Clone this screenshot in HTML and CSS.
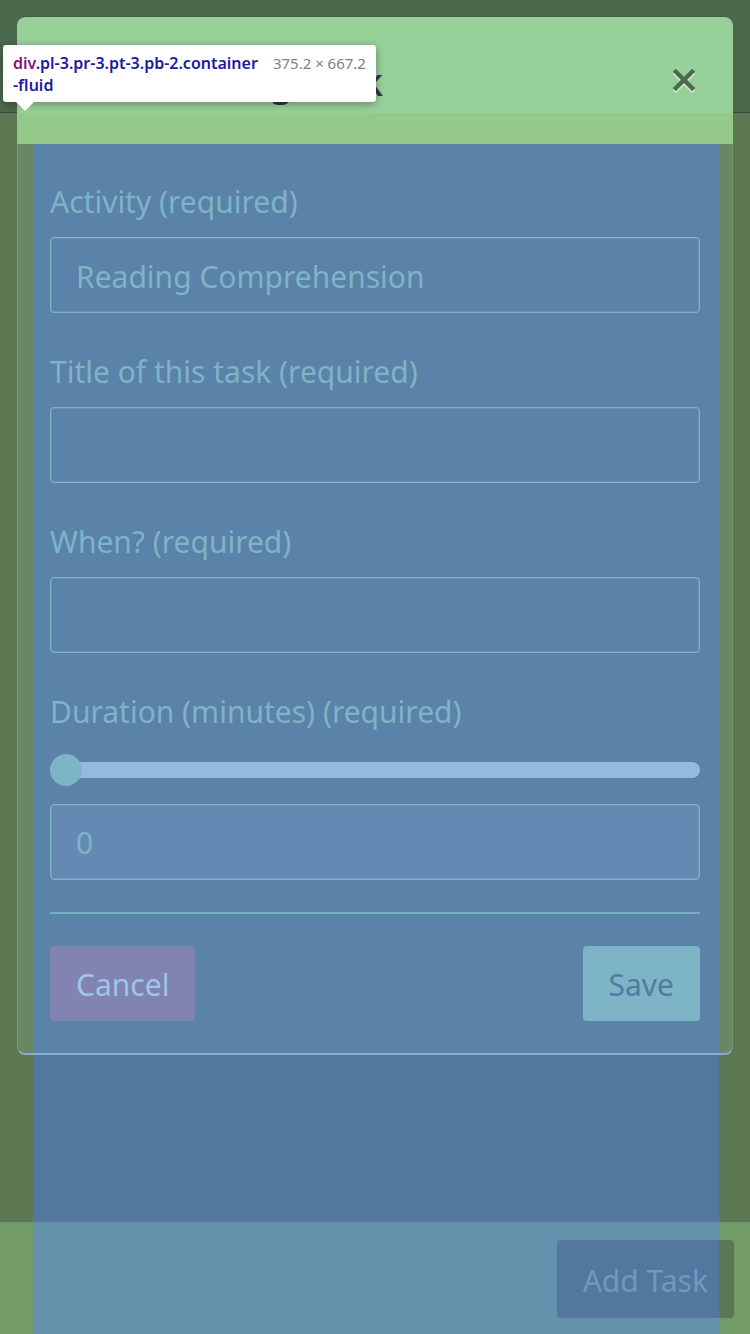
FILE: index.html
```html
<!DOCTYPE html>
<html lang="en">
<head>
<meta charset="utf-8">
<meta name="viewport" content="width=device-width, initial-scale=1">
<title>Add Learning Task</title>
<link rel="stylesheet" href="styles.css">
</head>
<body>
<div class="page">
  <div class="topbar"></div>
  <main class="content"></main>
  <footer class="footer">
    <button class="btn btn-add" type="button">Add Task</button>
  </footer>
</div>

<section class="modal" role="dialog" aria-labelledby="modal-title">
  <header class="modal-header">
    <h1 class="modal-title" id="modal-title">Add Learning Task</h1>
    <button class="close" type="button" aria-label="Close">
      <svg class="close-icon" viewBox="0 0 24 26" aria-hidden="true">
        <path class="close-shade" d="M3 5 21 23M21 5 3 23"/>
        <path class="close-mark" d="M3 3 21 21M21 3 3 21"/>
      </svg>
    </button>
  </header>
  <form class="modal-body">
    <div class="field">
      <label for="activity">Activity (required)</label>
      <div class="select-wrap">
        <select class="control select" id="activity">
          <option>Reading Comprehension</option>
        </select>
        <svg class="caret" viewBox="0 0 12 18" aria-hidden="true"><path d="M6 0 12 7H0ZM0 11H12L6 18Z"/></svg>
      </div>
    </div>
    <div class="field">
      <label for="title">Title of this task (required)</label>
      <input class="control" id="title" type="text">
    </div>
    <div class="field">
      <label for="when">When? (required)</label>
      <input class="control" id="when" type="text">
    </div>
    <div class="field field-last">
      <label for="duration">Duration (minutes) (required)</label>
      <input class="slider" id="duration" type="range" min="0" max="120" value="0">
      <input class="control control-readonly" type="text" value="0" aria-label="Duration value" readonly>
    </div>
    <hr class="rule">
    <div class="actions">
      <button class="btn btn-cancel" type="button">Cancel</button>
      <button class="btn btn-save" type="button">Save</button>
    </div>
  </form>
</section>

<div class="tooltip" role="tooltip">
  <div class="selector"><span class="tag">div</span>.pl-3.pr-3.pt-3.pb-2.container<br>-fluid</div>
  <div class="size">375.2 × 667.2</div>
</div>
</body>
</html>
```
FILE: styles.css
```css
:root {
  --blue: #5b82a9;
  --blue-dark: #52789d;
  --blue-foot: #6491ab;
  --green-dark: #5c7853;
  --green-side: #688762;
  --green-foot: #729b67;
  --teal: #7db4c6;
}

* { box-sizing: border-box; }

body {
  margin: 0;
  position: relative;
  font-family: "Noto Sans", "Open Sans", sans-serif;
  font-size: 30px;
  line-height: 48px;
}

button, input, select { font: inherit; }

.page {
  display: flex;
  flex-direction: column;
  min-height: 100vh;
}

.topbar {
  height: 113px;
  background: #4b694c;
  border-bottom: 1px solid #3d4b44;
}

.content {
  flex: 1;
  background: linear-gradient(to right, var(--green-dark) 33px, var(--blue-dark) 33px calc(100% - 31px), var(--green-dark) calc(100% - 31px));
}

.footer {
  display: flex;
  justify-content: flex-end;
  padding: 16px 16px;
  border-top: 2px solid rgba(118, 134, 150, 0.4);
  background: linear-gradient(to right, var(--green-foot) 33px, var(--blue-foot) 33px calc(100% - 31px), var(--green-foot) calc(100% - 31px)) border-box;
}

.btn {
  padding: 15px 26px 12px;
  border: 0;
  border-radius: 4px;
  line-height: 48px;
}

.btn-add {
  padding: 17px 26px 13px;
  color: #7397c0;
  background: linear-gradient(to right, var(--blue-dark) calc(100% - 15px), var(--green-dark) calc(100% - 15px));
}

.modal {
  position: absolute;
  top: 16px;
  left: 17px;
  right: 17px;
  color: var(--teal);
}

.modal-header {
  display: flex;
  align-items: center;
  justify-content: space-between;
  height: 128px;
  padding: 0 36px 0 33px;
  border-top: 1px solid #435a47;
  border-radius: 9px 9px 0 0;
  background: linear-gradient(#97d199 calc(100% - 31px), #95c98a calc(100% - 31px));
}

.modal-title {
  margin: 0;
  font-size: 38px;
  font-weight: 500;
  color: #34363f;
}

.close {
  display: flex;
  padding: 0;
  border: 0;
  background: none;
}

.close-icon { width: 26px; height: 28px; fill: none; stroke-width: 4; }
.close-shade { stroke: #d3ead2; }
.close-mark { stroke: #4c6a4d; }

.modal-body {
  padding: 34px 32px 32px;
  border: 1px solid #789670;
  border-top: 0;
  border-bottom: 2px solid #86acd2;
  border-radius: 0 0 8px 8px;
  background: linear-gradient(to right, var(--green-side) 15px, var(--blue) 15px calc(100% - 13px), var(--green-side) calc(100% - 13px));
}

.field {
  display: flex;
  flex-direction: column;
  gap: 11px;
  margin-bottom: 35px;
}

.field-last { margin-bottom: 32px; }

.select-wrap { display: grid; align-items: center; }
.select-wrap > * { grid-area: 1 / 1; }

.control {
  width: 100%;
  height: 76px;
  padding: 0 25px;
  border: 1px solid var(--teal);
  border-radius: 4px;
  background: transparent;
  box-shadow: inset 0 0 0 1px rgba(125, 180, 198, 0.35);
  color: var(--teal);
  appearance: none;
}

.select { padding-top: 3px; }

.control-readonly { background: #648ab4; }

.caret {
  width: 12px;
  height: 18px;
  margin-right: 26px;
  justify-self: end;
  fill: #5e84ac;
  pointer-events: none;
}

.slider {
  width: 100%;
  height: 32px;
  margin: 7px 0;
  background: transparent;
  appearance: none;
}

.slider::-webkit-slider-runnable-track {
  height: 16px;
  border-radius: 8px;
  background: #95b9df;
}

.slider::-webkit-slider-thumb {
  width: 32px;
  height: 32px;
  margin-top: -8px;
  border-radius: 50%;
  background: var(--teal);
  appearance: none;
}

.rule {
  height: 2px;
  margin: 0 0 32px;
  border: 0;
  background: #77afc2;
}

.actions {
  display: flex;
  justify-content: space-between;
}

.btn-cancel { background: #8184b0; color: #9fc5ea; }
.btn-save { background: var(--teal); color: #527ba2; }

.tooltip {
  position: absolute;
  top: 45px;
  left: 3px;
  display: flex;
  gap: 15px;
  padding: 7px 10px 6px;
  border-radius: 3px;
  background: #fff;
  box-shadow: 0 2px 8px rgba(0, 0, 0, 0.35);
  font-size: 16px;
  line-height: 22px;
  white-space: nowrap;
}

.tooltip::after {
  content: "";
  position: absolute;
  top: 100%;
  left: 13px;
  border: 9px solid transparent;
  border-top-color: #fff;
  border-bottom: 0;
}

.selector { font-weight: 600; color: #1a1aa6; }
.tag { color: #881280; }
.size { font-size: 15px; color: #808080; }
```
